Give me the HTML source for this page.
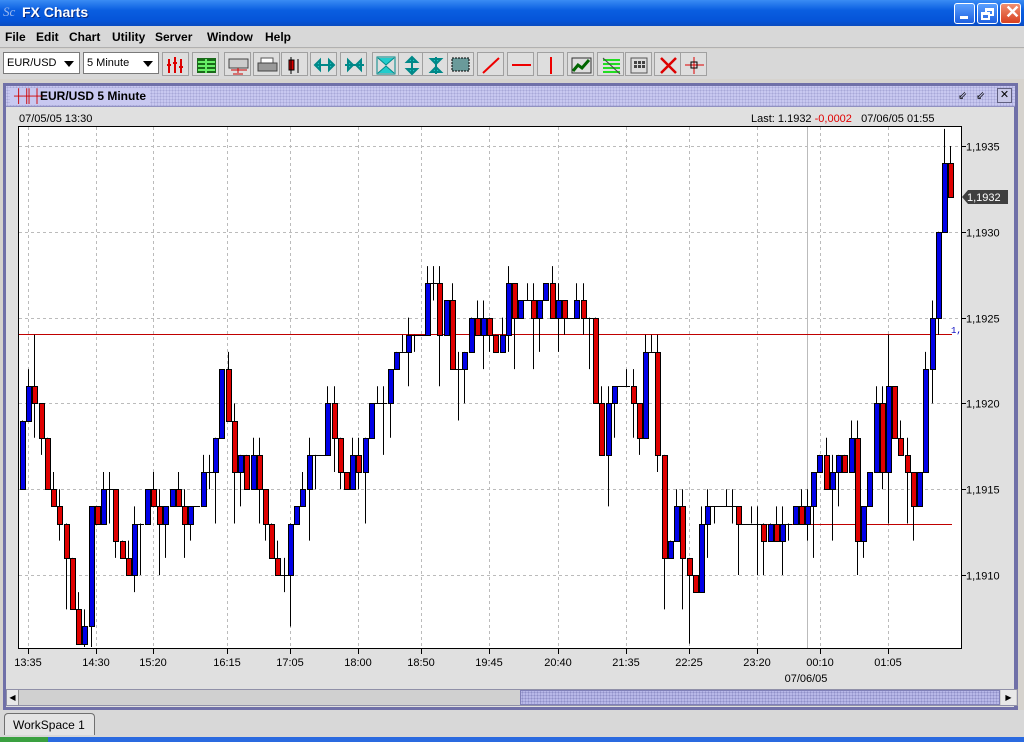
<!DOCTYPE html>
<html><head><meta charset="utf-8"><style>
*{margin:0;padding:0;box-sizing:border-box}
body{width:1024px;height:742px;overflow:hidden;background:#d6d3ce;font-family:"Liberation Sans",sans-serif;font-size:12px;position:relative}
.abs{position:absolute}
#title{left:0;top:0;width:1024px;height:26px;background:linear-gradient(#3a8cf4,#0a5ee0 40%,#0554d8 80%,#0a4cc0);}
#title span{position:absolute;left:22px;top:4px;color:#fff;font-weight:bold;font-size:14px;text-shadow:1px 1px #0a2a80}
.wb{position:absolute;top:3px;width:21px;height:21px;border:1px solid #fff;border-radius:3px;background:linear-gradient(#5aa0ff,#1e60e0)}
#menu{left:0;top:26px;width:1024px;height:22px;background:#d8d8d8;border-bottom:1px solid #b0b0b0}
#menu span{position:absolute;top:4px;font-weight:bold;font-size:12px}
#tb{left:0;top:49px;width:1024px;height:30px;background:#d8d8d8}
.combo{position:absolute;top:3px;height:22px;background:#fff;border:1px solid #7a7a7a;font-size:11px;padding:4px 3px}
.combo i{position:absolute;right:5px;top:8px;width:0;height:0;border-left:5px solid transparent;border-right:5px solid transparent;border-top:6px solid #000}
.btn{position:absolute;top:3px;width:27px;height:24px;border:1px solid #a0a0a0;background:#dedede}
.btn svg{position:absolute;left:2px;top:2px}
#frame{left:3px;top:83px;width:1015px;height:627px;border:3px solid #7070a8;border-right-width:4px;background:#e0e0e0}
#ftitle{left:0;top:0;width:1009px;height:21px;background:#c8c8f0;background-image:radial-gradient(#a8a8d8 0.8px,transparent 1px);background-size:3px 3px;border-bottom:1px solid #9090c0}
#ftitle b{position:absolute;left:4px;top:2px;height:17px;padding:1px 4px 0 30px;background:#c8c8f0;font-size:12px}
</style></head><body>
<div id="title" class="abs"><span style="left:3px;top:4px;font-style:italic;color:#9ab8f0;font-weight:normal;font-family:'Liberation Serif',serif;font-size:13px;text-shadow:none">Sc</span><span>FX Charts</span>
<div class="wb" style="left:954px"><div style="position:absolute;left:5px;top:12px;width:8px;height:3px;background:#fff"></div></div>
<div class="wb" style="left:977px"><div style="position:absolute;left:7px;top:4px;width:9px;height:8px;border:2px solid #fff;border-top-width:3px"></div><div style="position:absolute;left:3px;top:8px;width:9px;height:8px;border:2px solid #fff;border-top-width:3px;background:#3a78e8"></div></div>
<div class="wb" style="left:1000px;background:linear-gradient(#f09070,#d84020)"><span style="left:4px;top:-2px;font-size:18px;text-shadow:none">✕</span></div>
</div>
<div id="menu" class="abs">
<span style="left:5px">File</span><span style="left:36px">Edit</span><span style="left:69px">Chart</span><span style="left:112px">Utility</span><span style="left:155px">Server</span><span style="left:207px">Window</span><span style="left:265px">Help</span>
</div>
<div id="tb" class="abs">
<div class="combo" style="left:3px;width:77px">EUR/USD<i></i></div>
<div class="combo" style="left:83px;width:76px">5 Minute<i></i></div>
<div id="btns"></div>
</div>
<div id="frame" class="abs">
<div id="ftitle" class="abs"><b><span style="position:absolute;left:4px;top:0;color:#d00000;font-size:13px">┼╫┼</span>EUR/USD 5 Minute</b>
<div style="position:absolute;left:952px;top:3px;width:14px;height:14px;font-size:11px;line-height:14px">⇙</div>
<div style="position:absolute;left:970px;top:3px;width:14px;height:14px;font-size:11px;line-height:14px">⇙</div>
<div style="position:absolute;left:991px;top:2px;width:15px;height:15px;border:1px solid #606080;background:#c8c8e8;font-size:11px;line-height:13px;text-align:center">✕</div>
</div>
<div class="abs" style="left:13px;top:27px;font-size:11px">07/05/05 13:30</div>
<div class="abs" style="left:745px;top:27px;font-size:11px">Last: 1.1932 <span style="color:#e00000">-0,0002</span>&nbsp;&nbsp; 07/06/05 01:55</div>
</div>
<svg id="ch" class="abs" style="left:0;top:0" width="1024" height="742"></svg>
<div class="abs" style="left:6px;top:689px;width:1012px;height:17px;background:#d0d0d0;border:1px solid #9090a8"></div>
<div class="abs" style="left:7px;top:690px;width:12px;height:15px;background:#e8e8e8;border-right:1px solid #909090;font-size:8px;line-height:15px;text-align:center">◀</div>
<div class="abs" style="left:520px;top:690px;width:480px;height:15px;background:#b8b8e8;background-image:radial-gradient(#9090c8 0.8px,transparent 1px);background-size:3px 3px;border:1px solid #8080b8"></div>
<div class="abs" style="left:1001px;top:690px;width:15px;height:15px;background:#e8e8e8;font-size:8px;line-height:15px;text-align:center">▶</div>
<div class="abs" style="left:0;top:710px;width:1024px;height:27px;background:#d8d8d8"></div>
<div class="abs" style="left:4px;top:713px;width:91px;height:22px;border:1px solid #707070;border-bottom:none;border-radius:4px 4px 0 0;background:#e4e4e4;font-size:12px;padding:4px 0 0 8px">WorkSpace 1</div>
<div class="abs" style="left:0;top:737px;width:1024px;height:5px;background:#2a6ae0"></div>
<div class="abs" style="left:0;top:737px;width:48px;height:5px;background:#3aa040"></div>
<script>
var s=document.getElementById('ch'),h='';
function Y(p){return 746.6-17.16*p}
h+='<rect x="18.5" y="126.5" width="943" height="522" fill="#fff" stroke="#000"/>';
var tx=[[28,'13:35'],[96,'14:30'],[153,'15:20'],[227,'16:15'],[290,'17:05'],[358,'18:00'],[421,'18:50'],[489,'19:45'],[558,'20:40'],[626,'21:35'],[689,'22:25'],[757,'23:20'],[820,'00:10'],[888,'01:05']];
tx.forEach(function(t){h+='<line x1="'+t[0]+'.5" y1="127" x2="'+t[0]+'.5" y2="648" stroke="#bbb" stroke-dasharray="3,3"/>';h+='<line x1="'+t[0]+'.5" y1="648" x2="'+t[0]+'.5" y2="654" stroke="#000"/>';h+='<text x="'+t[0]+'" y="666" font-size="11" text-anchor="middle" font-family="Liberation Sans">'+t[1]+'</text>'});
h+='<text x="806" y="682" font-size="11" text-anchor="middle" font-family="Liberation Sans">07/06/05</text>';
[35,30,25,20,15,10].forEach(function(p){var y=Math.round(Y(p))+.5;h+='<line x1="19" y1="'+y+'" x2="961" y2="'+y+'" stroke="#bbb" stroke-dasharray="3,3"/><line x1="961" y1="'+y+'" x2="966" y2="'+y+'" stroke="#000"/><text x="966" y="'+(y+4)+'" font-size="11" font-family="Liberation Sans">1,19'+p+'</text>'});
h+='<line x1="807.5" y1="127" x2="807.5" y2="648" stroke="#bbb"/>';
h+='<line x1="19" y1="334.5" x2="952" y2="334.5" stroke="#c00000"/><line x1="740" y1="524.5" x2="952" y2="524.5" stroke="#c00000"/>';
h+='<text x="951" y="333" font-size="9" fill="#0000c0" font-family="Liberation Mono">1,</text>';
var c=[19,21,20,18,15,14,13,11,8,6,7,14,13,15,15,12,11,10,13,13,15,14,13,14,15,14,13,14,14,16,16,18,22,19,16,17,15,17,15,13,11,10,10,13,14,15,17,17,17,20,18,16,15,17,16,18,20,20,20,22,23,23,24,24,24,27,27,24,26,22,22,23,25,24,25,24,23,24,27,25,26,26,25,26,27,25,26,25,25,26,25,25,20,17,20,21,21,21,20,18,23,23,17,11,12,14,11,10,9,13,14,14,14,14,14,13,13,13,13,12,13,12,13,13,14,13,14,16,17,15,16,17,16,18,12,14,16,20,16,21,18,17,16,14,16,22,25,30,34,32];
var o=15,w='',b='';
for(var k=0;k<c.length;k++){var x=Math.round(22+6.23*k),cl=c[k],hi=Math.max(o,cl)+((k*7)%4>1?((k*3)%3)+1:0),lo=Math.min(o,cl)-((k*5)%4>1?((k*11)%3)+1:0);
if(k==2)hi=24;if(k==67)hi=28;if(k==100)hi=24;if(k==107)lo=6;if(k==139)hi=24;if(k==148)hi=36;
var y1=Math.max(128,Y(hi)),y2=Math.min(647,Y(lo));
w+='<line x1="'+(x+.5)+'" y1="'+y1+'" x2="'+(x+.5)+'" y2="'+y2+'" stroke="#000"/>';
if(cl==o){w+='<line x1="'+(x-3)+'" y1="'+(Math.round(Y(cl))+.5)+'" x2="'+(x+4)+'" y2="'+(Math.round(Y(cl))+.5)+'" stroke="#000"/>';}
else{var t=Math.round(Y(Math.max(o,cl))),bt=Math.round(Y(Math.min(o,cl)));b+='<rect x="'+(x-2)+'.5" y="'+(t+.5)+'" width="5" height="'+(bt-t)+'" fill="'+(cl>o?'#0000e8':'#e00000')+'" stroke="#000"/>';}
o=cl;}
h+=w+b;
var py=Math.round(Y(32));
h+='<path d="M962 '+py+' l6 -7 h40 v14 h-40 z" fill="#404040"/><text x="967" y="'+(py+4)+'" font-size="11" fill="#fff" font-family="Liberation Sans">1,1932</text>';
s.innerHTML=h;
var bx=[162,192,224,253,281,310,340,372,398,422,447,477,507,537,567,597,625,654,680],ic=[
'<path d="M4 4v14M10 2v16M16 4v14M2 10h4M8 8h4M14 12h4" stroke="#d00" stroke-width="2"/>',
'<rect x="2" y="3" width="19" height="15" fill="#1a6a1a"/><path d="M3 7h17M3 11h17M3 15h17M11 4v14" stroke="#6e6" stroke-width="2"/>',
'<rect x="2" y="4" width="19" height="9" fill="#ccc" stroke="#444"/><path d="M4 15h16M11 13v5M6 19h10" stroke="#c00"/>',
'<rect x="5" y="3" width="12" height="5" fill="#fff" stroke="#555"/><rect x="2" y="8" width="19" height="8" fill="#999" stroke="#444"/>',
'<rect x="5" y="5" width="5" height="10" fill="#d00" stroke="#000"/><path d="M7 2v17M14 4v14" stroke="#000"/>',
'<path d="M2 10h19M2 10l5-5v10zM21 10l-5-5v10z" stroke="#088" fill="#2cc" stroke-width="2"/>',
'<path d="M2 10h19M10 10l-5-5v10zM13 10l5-5v10z" stroke="#088" fill="#2cc" stroke-width="2"/>',
'<rect x="2" y="2" width="18" height="17" fill="none" stroke="#088"/><path d="M3 3l8 7 8-7M3 18l8-7 8 7" stroke="#088" fill="#2cc"/>',
'<path d="M11 2v17M11 2l-5 5h10zM11 19l-5-5h10z" stroke="#088" fill="#2cc" stroke-width="2"/>',
'<path d="M11 2v17M11 9l-5-5h10zM11 12l-5 5h10z" stroke="#088" fill="#2cc" stroke-width="2"/>',
'<rect x="2" y="3" width="17" height="13" fill="#6a9a9a" stroke="#000" stroke-dasharray="2,1"/>',
'<path d="M3 18L19 3" stroke="#e00" stroke-width="2"/>',
'<path d="M2 10h19" stroke="#e00" stroke-width="2"/>',
'<path d="M11 2v17" stroke="#e00" stroke-width="2"/>',
'<rect x="2" y="3" width="19" height="15" fill="none" stroke="#333"/><path d="M3 16l5-6 4 3 7-8" stroke="#060" stroke-width="3" fill="none"/>',
'<path d="M3 5h17M3 9h17M3 13h17M3 17h17" stroke="#2d2" stroke-width="2"/><path d="M3 3l17 16" stroke="#444"/>',
'<rect x="3" y="3" width="16" height="15" fill="#ddd" stroke="#555"/><path d="M6 6h3v3h-3zM10 6h3v3h-3zM14 6h3v3h-3zM6 10h3v3h-3zM10 10h3v3h-3zM14 10h3v3h-3z" fill="#444"/>',
'<path d="M4 3l15 15M19 3L4 18" stroke="#d00" stroke-width="2.5"/>',
'<path d="M11 2v17M2 10h19" stroke="#d00"/><rect x="8" y="7" width="6" height="6" fill="none" stroke="#000"/>'];
var bh='';bx.forEach(function(x,i){bh+='<div class="btn" style="left:'+x+'px"><svg width="23" height="20">'+ic[i]+'</svg></div>'});
document.getElementById('btns').innerHTML=bh;
</script>
</body></html>
